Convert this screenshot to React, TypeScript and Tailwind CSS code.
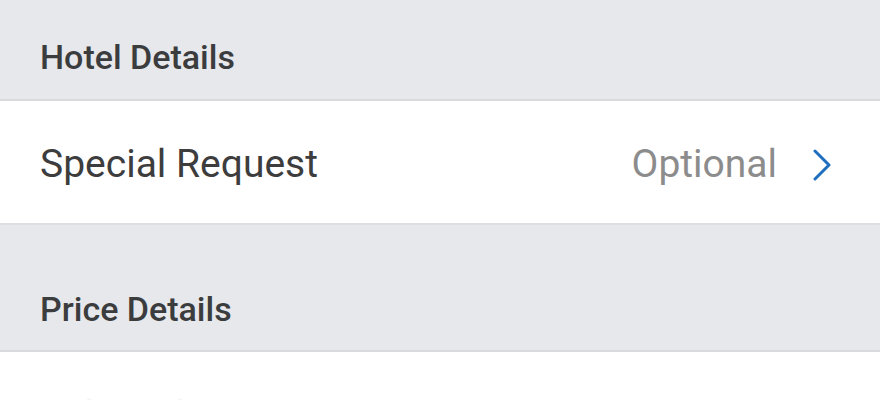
function SectionHeader({ title, tall }: { title: string; tall?: boolean }) {
  return (
    <div
      className={`flex items-end border-b-2 border-[#d8dadd] bg-[#e6e8eb] px-10 ${
        tall ? 'h-[127px] pb-[24px]' : 'h-[101px] pb-[25px]'
      }`}
    >
      <h2 className="text-[34px] font-medium leading-none text-[#3b3c3e]">{title}</h2>
    </div>
  )
}

function Row({ label, value }: { label: string; value?: string }) {
  return (
    <div className="flex h-[124px] items-center justify-between border-b-2 border-[#dcdee1] bg-white pl-10 pr-[49px] pt-[5px]">
      <span className="text-[39px] leading-none text-[#3d3d3d]">{label}</span>
      <div className="flex items-center gap-[36px]">
        {value && <span className="text-[39px] leading-none text-[#8c8c8c]">{value}</span>}
        <svg width="18" height="32" viewBox="0 0 18 32" fill="none" className="text-[#1f6fbf]">
          <polyline points="2,2 16,16 2,30" stroke="currentColor" strokeWidth="3" strokeLinecap="round" strokeLinejoin="round" />
        </svg>
      </div>
    </div>
  )
}

export default function App() {
  return (
    <div className="h-[400px] w-[880px] overflow-hidden bg-white" style={{ fontFamily: 'Roboto, "Noto Sans", sans-serif' }}>
      <SectionHeader title="Hotel Details" />
      <Row label="Special Request" value="Optional" />
      <SectionHeader title="Price Details" tall />
      <div className="flex justify-between bg-white pl-10 pr-[49px] pt-[44px]">
        <span className="text-[39px] leading-none text-[#f4f4f4]">Subtotal</span>
        <span className="text-[39px] leading-none text-[#f4f4f4]">Rp 1.234.567</span>
      </div>
    </div>
  )
}
